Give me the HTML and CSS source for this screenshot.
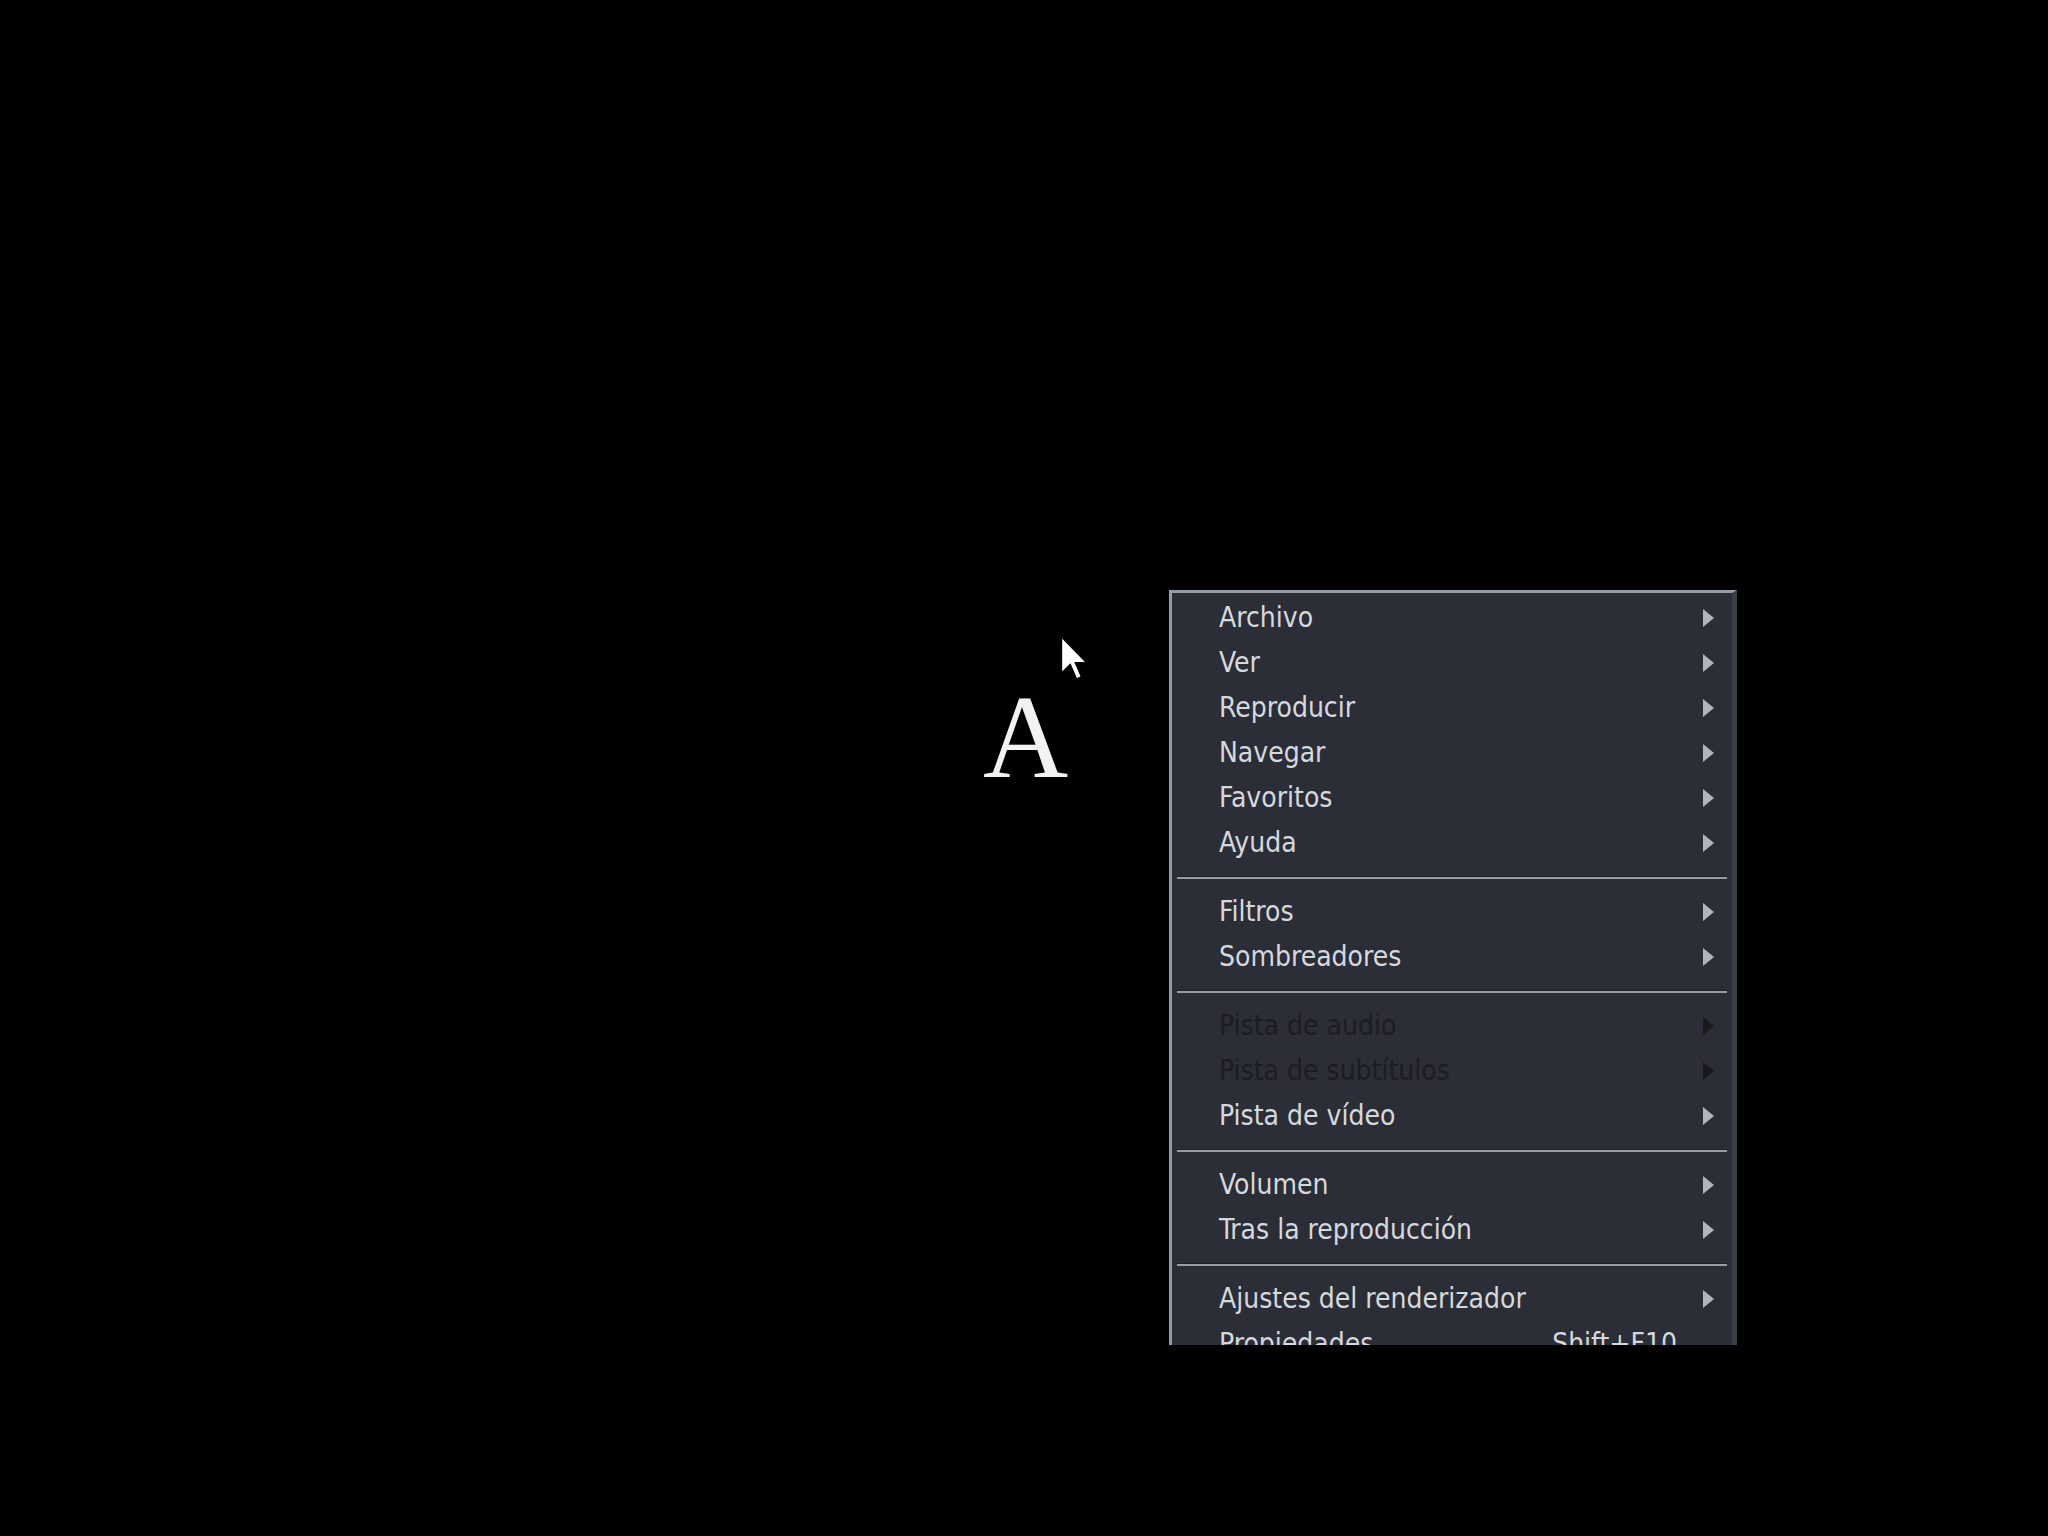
FILE: index.html
```html
<!DOCTYPE html>
<html lang="es">
<head>
<meta charset="utf-8">
<title>Menu</title>
<link rel="stylesheet" href="styles.css">
</head>
<body>
<div class="stage">
  <div class="glyph">A</div>
  <svg class="cursor" viewBox="0 0 12 19" width="29" height="46" aria-hidden="true">
    <path d="M0.5 0.5 L0.5 16 L4.2 12.4 L6.8 18.3 L9 17.3 L6.5 11.6 L11.3 11.6 Z" fill="#ffffff" stroke="#000000" stroke-width="0.8" stroke-linejoin="miter"/>
  </svg>
  <div class="menu">
    <div class="item"><span class="label">Archivo</span><span class="arrow"></span></div>
    <div class="item"><span class="label">Ver</span><span class="arrow"></span></div>
    <div class="item"><span class="label">Reproducir</span><span class="arrow"></span></div>
    <div class="item"><span class="label">Navegar</span><span class="arrow"></span></div>
    <div class="item"><span class="label">Favoritos</span><span class="arrow"></span></div>
    <div class="item"><span class="label">Ayuda</span><span class="arrow"></span></div>
    <div class="sep"></div>
    <div class="item"><span class="label">Filtros</span><span class="arrow"></span></div>
    <div class="item"><span class="label">Sombreadores</span><span class="arrow"></span></div>
    <div class="sep"></div>
    <div class="item disabled"><span class="label">Pista de audio</span><span class="arrow"></span></div>
    <div class="item disabled"><span class="label">Pista de subtítulos</span><span class="arrow"></span></div>
    <div class="item"><span class="label">Pista de vídeo</span><span class="arrow"></span></div>
    <div class="sep"></div>
    <div class="item"><span class="label">Volumen</span><span class="arrow"></span></div>
    <div class="item"><span class="label">Tras la reproducción</span><span class="arrow"></span></div>
    <div class="sep"></div>
    <div class="item"><span class="label">Ajustes del renderizador</span><span class="arrow"></span></div>
    <div class="item"><span class="label">Propiedades</span><span class="shortcut">Shift+F10</span></div>
  </div>
</div>
</body>
</html>
```
FILE: styles.css
```css
html, body {
  margin: 0;
  padding: 0;
  background: #000000;
}
.stage {
  position: relative;
  width: 2048px;
  height: 1536px;
  overflow: hidden;
  background: #000000;
}
.glyph {
  position: absolute;
  left: 983px;
  top: 679px;
  font-family: "Liberation Serif", "Times New Roman", serif;
  font-size: 118px;
  line-height: 1;
  color: #f2f2f2;
}
.cursor {
  position: absolute;
  left: 1060px;
  top: 635px;
}
.menu {
  position: absolute;
  left: 1169px;
  top: 590px;
  width: 560px;
  height: 750px;
  overflow: hidden;
  background: #2b2e36;
  border-top: 3px solid #959ca4;
  border-left: 3px solid #959ca4;
  border-right: 5px solid #393d45;
  padding-top: 2px;
  font-family: "DejaVu Sans Condensed", "DejaVu Sans", sans-serif;
  font-stretch: condensed;
  font-size: 28px;
  color: #d5d9df;
}
.item {
  display: flex;
  align-items: center;
  height: 45px;
  padding-left: 47px;
  padding-right: 18px;
  white-space: nowrap;
}
.label {
  flex: 1;
  line-height: 45px;
}
.arrow {
  width: 0;
  height: 0;
  border-left: 11px solid #aeb5bf;
  border-top: 9px solid transparent;
  border-bottom: 9px solid transparent;
}
.disabled {
  color: #1b1d22;
}
.disabled .arrow {
  border-left-color: #17191d;
}
.shortcut {
  margin-right: 37px;
}
.sep {
  height: 24px;
  margin: 0 5px;
  box-sizing: border-box;
  padding-top: 11px;
}
.sep::before {
  content: "";
  display: block;
  height: 1px;
  background: #1f2127;
}
.sep::after {
  content: "";
  display: block;
  height: 2px;
  background: #959da6;
}
```
